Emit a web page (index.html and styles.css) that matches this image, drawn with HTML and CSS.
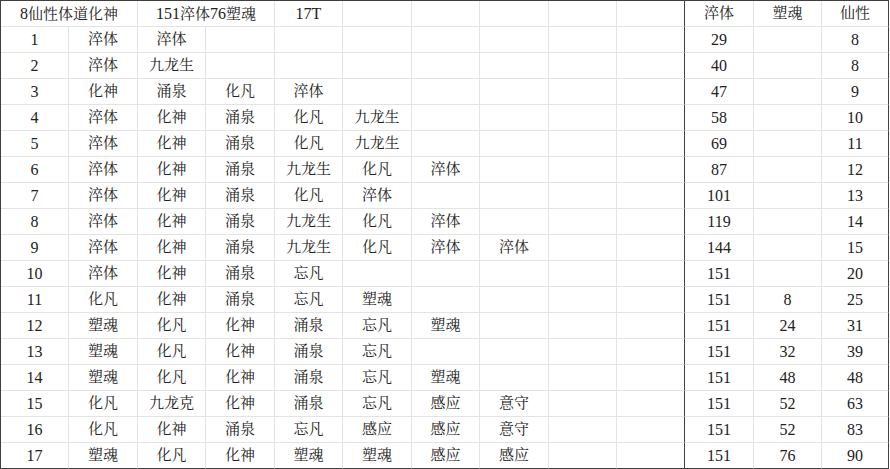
FILE: index.html
```html
<!DOCTYPE html>
<html lang="zh">
<head>
<meta charset="utf-8">
<title>表格</title>
<link rel="stylesheet" href="styles.css">
</head>
<body>
<div class="sheet">
  <div class="row"><div class="c span2"><span class="n">8</span>仙性体道化神</div><div class="c span2"><span class="n">151</span>淬体<span class="n">76</span>塑魂</div><div class="c"><span class="n">17T</span></div><div class="c"></div><div class="c"></div><div class="c"></div><div class="c"></div><div class="c sep"></div><div class="c">淬体</div><div class="c">塑魂</div><div class="c">仙性</div></div>
  <div class="row"><div class="c n">1</div><div class="c">淬体</div><div class="c">淬体</div><div class="c"></div><div class="c"></div><div class="c"></div><div class="c"></div><div class="c"></div><div class="c"></div><div class="c sep"></div><div class="c n">29</div><div class="c"></div><div class="c n">8</div></div>
  <div class="row"><div class="c n">2</div><div class="c">淬体</div><div class="c">九龙生</div><div class="c"></div><div class="c"></div><div class="c"></div><div class="c"></div><div class="c"></div><div class="c"></div><div class="c sep"></div><div class="c n">40</div><div class="c"></div><div class="c n">8</div></div>
  <div class="row"><div class="c n">3</div><div class="c">化神</div><div class="c">涌泉</div><div class="c">化凡</div><div class="c">淬体</div><div class="c"></div><div class="c"></div><div class="c"></div><div class="c"></div><div class="c sep"></div><div class="c n">47</div><div class="c"></div><div class="c n">9</div></div>
  <div class="row"><div class="c n">4</div><div class="c">淬体</div><div class="c">化神</div><div class="c">涌泉</div><div class="c">化凡</div><div class="c">九龙生</div><div class="c"></div><div class="c"></div><div class="c"></div><div class="c sep"></div><div class="c n">58</div><div class="c"></div><div class="c n">10</div></div>
  <div class="row"><div class="c n">5</div><div class="c">淬体</div><div class="c">化神</div><div class="c">涌泉</div><div class="c">化凡</div><div class="c">九龙生</div><div class="c"></div><div class="c"></div><div class="c"></div><div class="c sep"></div><div class="c n">69</div><div class="c"></div><div class="c n">11</div></div>
  <div class="row"><div class="c n">6</div><div class="c">淬体</div><div class="c">化神</div><div class="c">涌泉</div><div class="c">九龙生</div><div class="c">化凡</div><div class="c">淬体</div><div class="c"></div><div class="c"></div><div class="c sep"></div><div class="c n">87</div><div class="c"></div><div class="c n">12</div></div>
  <div class="row"><div class="c n">7</div><div class="c">淬体</div><div class="c">化神</div><div class="c">涌泉</div><div class="c">化凡</div><div class="c">淬体</div><div class="c"></div><div class="c"></div><div class="c"></div><div class="c sep"></div><div class="c n">101</div><div class="c"></div><div class="c n">13</div></div>
  <div class="row"><div class="c n">8</div><div class="c">淬体</div><div class="c">化神</div><div class="c">涌泉</div><div class="c">九龙生</div><div class="c">化凡</div><div class="c">淬体</div><div class="c"></div><div class="c"></div><div class="c sep"></div><div class="c n">119</div><div class="c"></div><div class="c n">14</div></div>
  <div class="row"><div class="c n">9</div><div class="c">淬体</div><div class="c">化神</div><div class="c">涌泉</div><div class="c">九龙生</div><div class="c">化凡</div><div class="c">淬体</div><div class="c">淬体</div><div class="c"></div><div class="c sep"></div><div class="c n">144</div><div class="c"></div><div class="c n">15</div></div>
  <div class="row"><div class="c n">10</div><div class="c">淬体</div><div class="c">化神</div><div class="c">涌泉</div><div class="c">忘凡</div><div class="c"></div><div class="c"></div><div class="c"></div><div class="c"></div><div class="c sep"></div><div class="c n">151</div><div class="c"></div><div class="c n">20</div></div>
  <div class="row"><div class="c n">11</div><div class="c">化凡</div><div class="c">化神</div><div class="c">涌泉</div><div class="c">忘凡</div><div class="c">塑魂</div><div class="c"></div><div class="c"></div><div class="c"></div><div class="c sep"></div><div class="c n">151</div><div class="c n">8</div><div class="c n">25</div></div>
  <div class="row"><div class="c n">12</div><div class="c">塑魂</div><div class="c">化凡</div><div class="c">化神</div><div class="c">涌泉</div><div class="c">忘凡</div><div class="c">塑魂</div><div class="c"></div><div class="c"></div><div class="c sep"></div><div class="c n">151</div><div class="c n">24</div><div class="c n">31</div></div>
  <div class="row"><div class="c n">13</div><div class="c">塑魂</div><div class="c">化凡</div><div class="c">化神</div><div class="c">涌泉</div><div class="c">忘凡</div><div class="c"></div><div class="c"></div><div class="c"></div><div class="c sep"></div><div class="c n">151</div><div class="c n">32</div><div class="c n">39</div></div>
  <div class="row"><div class="c n">14</div><div class="c">塑魂</div><div class="c">化凡</div><div class="c">化神</div><div class="c">涌泉</div><div class="c">忘凡</div><div class="c">塑魂</div><div class="c"></div><div class="c"></div><div class="c sep"></div><div class="c n">151</div><div class="c n">48</div><div class="c n">48</div></div>
  <div class="row"><div class="c n">15</div><div class="c">化凡</div><div class="c">九龙克</div><div class="c">化神</div><div class="c">涌泉</div><div class="c">忘凡</div><div class="c">感应</div><div class="c">意守</div><div class="c"></div><div class="c sep"></div><div class="c n">151</div><div class="c n">52</div><div class="c n">63</div></div>
  <div class="row"><div class="c n">16</div><div class="c">化凡</div><div class="c">化神</div><div class="c">涌泉</div><div class="c">忘凡</div><div class="c">感应</div><div class="c">感应</div><div class="c">意守</div><div class="c"></div><div class="c sep"></div><div class="c n">151</div><div class="c n">52</div><div class="c n">83</div></div>
  <div class="row"><div class="c n">17</div><div class="c">塑魂</div><div class="c">化凡</div><div class="c">化神</div><div class="c">塑魂</div><div class="c">塑魂</div><div class="c">感应</div><div class="c">感应</div><div class="c"></div><div class="c sep"></div><div class="c n">151</div><div class="c n">76</div><div class="c n">90</div></div>
</div>
</body>
</html>
```

FILE: styles.css
```css
html, body {
  margin: 0;
  padding: 0;
  background: #ffffff;
}

.sheet {
  width: 888px;
  border-left: 1px solid #3f3f3f;
  border-top: 1px solid #3f3f3f;
  display: flex;
  flex-direction: column;
  font-family: "Liberation Serif", "Noto Serif CJK SC", "Noto Sans CJK SC", serif;
  font-size: 15px;
  color: #222222;
}

.row {
  display: grid;
  grid-template-columns: 68px 69px 68px 69px 68px 69px 68px 69px 68px 68px 69px 68px 67px;
  height: 26px;
}

.c {
  box-sizing: border-box;
  border-right: 1px solid #e3e3e3;
  border-bottom: 1px solid #e3e3e3;
  height: 26px;
  line-height: 25px;
  text-align: center;
  white-space: nowrap;
  overflow: hidden;
}

.n {
  font-size: 16px;
}

.span2 {
  grid-column: span 2;
}

.sep,
.row > .c:last-child {
  border-right-color: #3f3f3f;
}

.row:last-child > .c {
  border-bottom-color: #3f3f3f;
}
```
